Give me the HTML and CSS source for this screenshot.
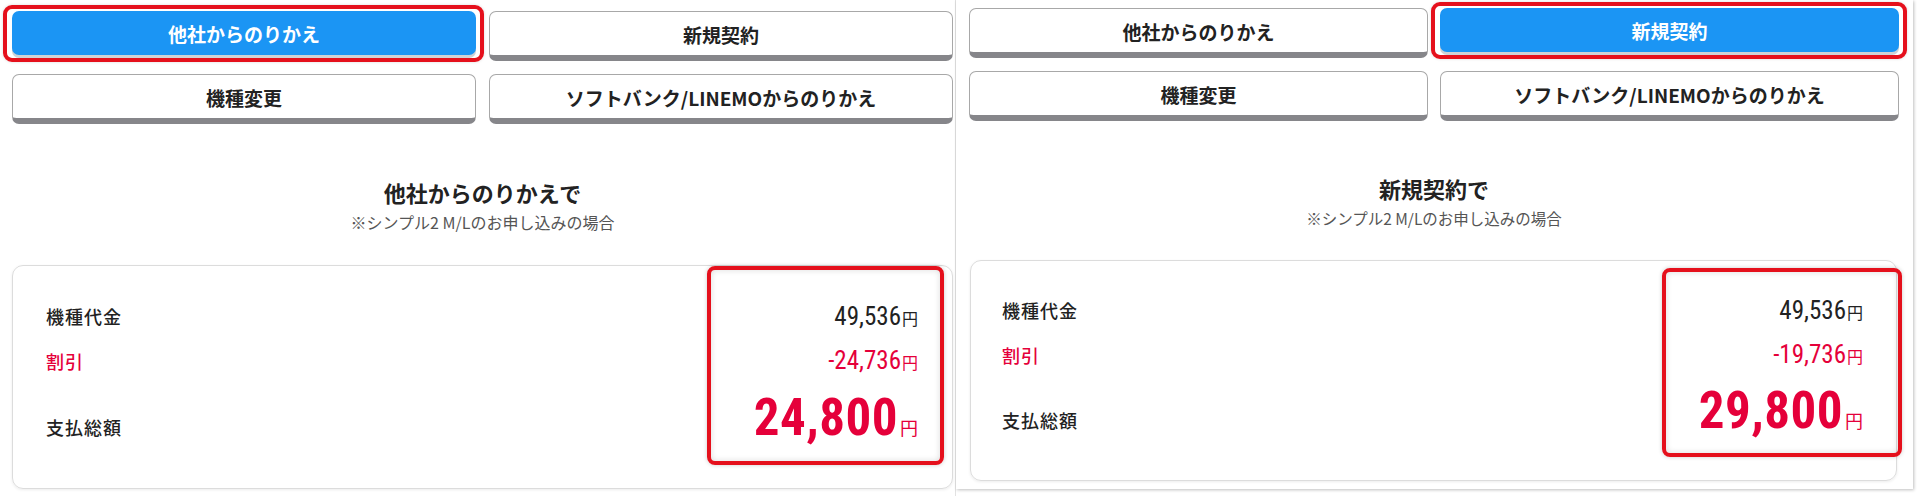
FILE: index.html
```html
<!DOCTYPE html>
<html lang="ja">
<head>
<meta charset="utf-8">
<title>料金比較</title>
<link rel="stylesheet" href="styles.css">
</head>
<body>
<div class="page">
  <section class="panel panel-left">
    <div class="tabs">
      <div class="tab active">他社からのりかえ</div>
      <div class="tab">新規契約</div>
      <div class="tab">機種変更</div>
      <div class="tab">ソフトバンク/LINEMOからのりかえ</div>
    </div>
    <div class="heading">
      <h2 class="title">他社からのりかえで</h2>
      <p class="note">※シンプル2 M/Lのお申し込みの場合</p>
    </div>
    <div class="card">
      <div class="row">
        <span class="label">機種代金</span>
        <span class="value">49,536<span class="yen">円</span></span>
      </div>
      <div class="row discount">
        <span class="label">割引</span>
        <span class="value">-24,736<span class="yen">円</span></span>
      </div>
      <div class="row total">
        <span class="label">支払総額</span>
        <span class="value">24,800<span class="yen">円</span></span>
      </div>
      <div class="mark"></div>
    </div>
  </section>
  <section class="panel panel-right">
    <div class="tabs">
      <div class="tab">他社からのりかえ</div>
      <div class="tab active">新規契約</div>
      <div class="tab">機種変更</div>
      <div class="tab">ソフトバンク/LINEMOからのりかえ</div>
    </div>
    <div class="heading">
      <h2 class="title">新規契約で</h2>
      <p class="note">※シンプル2 M/Lのお申し込みの場合</p>
    </div>
    <div class="card">
      <div class="row">
        <span class="label">機種代金</span>
        <span class="value">49,536<span class="yen">円</span></span>
      </div>
      <div class="row discount">
        <span class="label">割引</span>
        <span class="value">-19,736<span class="yen">円</span></span>
      </div>
      <div class="row total">
        <span class="label">支払総額</span>
        <span class="value">29,800<span class="yen">円</span></span>
      </div>
      <div class="mark"></div>
    </div>
  </section>
</div>
</body>
</html>
```

FILE: styles.css
```css
* { box-sizing: border-box; }

html, body {
  margin: 0;
  padding: 0;
  background: #ffffff;
}

body {
  font-family: "Noto Sans CJK JP", "Noto Sans", sans-serif;
  color: #222222;
}

.page {
  display: flex;
  align-items: flex-start;
  width: 1921px;
  height: 496px;
  overflow: hidden;
}

.panel {
  display: flex;
  flex-direction: column;
  background: #ffffff;
}

.panel-left {
  width: 956px;
  height: 496px;
  padding: 11px 2px 0 12px;
  border-right: 1px solid #e2e2e2;
}

.panel-right {
  width: 957px;
  height: 489px;
  padding: 8px 14px 0 13px;
  box-shadow: 1px 1px 3px rgba(0, 0, 0, 0.25);
  position: relative;
  z-index: 1;
}

/* tabs */
.tabs {
  display: grid;
  grid-template-columns: 1fr 1fr;
  column-gap: 13px;
  row-gap: 13px;
}

.panel-right .tabs {
  column-gap: 12px;
}

.tab {
  position: relative;
  height: 50px;
  display: flex;
  align-items: center;
  justify-content: center;
  background: #ffffff;
  border: 1px solid #a8a8a8;
  border-bottom: 6px solid #86868a;
  border-radius: 7px;
  font-size: 19px;
  font-weight: 700;
  color: #222222;
  padding-top: 1px;
}

.tab.active {
  align-self: start;
  height: 44px;
  border: 0;
  background: #1b95f4;
  color: #ffffff;
  box-shadow: 0 3px 0 #cfd2d6;
  padding-top: 0;
}

.tab.active::after {
  content: "";
  position: absolute;
  top: -6px;
  left: -9px;
  right: -8px;
  bottom: -7px;
  border: 4px solid #e5101c;
  border-radius: 9px;
  box-shadow: 0 0 3px rgba(0, 0, 0, 0.15);
}

/* heading */
.heading {
  text-align: center;
  margin-top: 53px;
}

.panel-right .heading {
  margin-top: 52px;
}

.title {
  margin: 0;
  font-size: 22px;
  line-height: 30px;
  font-weight: 700;
  color: #222222;
}

.note {
  margin: 4px 0 0;
  font-size: 16px;
  line-height: 22px;
  color: #555555;
}

.panel-right .note {
  font-size: 15.5px;
}

/* card */
.card {
  position: relative;
  margin-top: 32px;
  height: 224px;
  border: 1px solid #dcdcdc;
  border-radius: 11px;
  box-shadow: 0 1px 3px rgba(0, 0, 0, 0.08);
  padding: 28px 34px 0 33px;
}

.panel-right .card {
  margin: 31px 2px 0 1px;
  height: 221px;
  padding: 27px 33px 0 31px;
}

.row {
  display: flex;
  justify-content: space-between;
  align-items: center;
  height: 44px;
}

.row.discount {
  height: 45px;
}

.label {
  font-size: 18px;
  font-weight: 500;
  letter-spacing: 1px;
  color: #222222;
}

.value {
  font-family: "Liberation Sans Narrow", "Roboto Condensed", "DejaVu Sans Condensed", "Liberation Sans", sans-serif;
  font-stretch: condensed;
  font-size: 25px;
  color: #222222;
}

.yen {
  font-family: "Noto Sans CJK JP", sans-serif;
  font-size: 16px;
  margin-left: 1px;
}

.discount .label,
.discount .value {
  color: #e5003a;
}

.row.total {
  align-items: baseline;
  height: auto;
  margin-top: 10px;
}

.panel-right .row.total {
  margin-top: 9px;
}

.total .value {
  font-size: 51px;
  line-height: 50px;
  font-weight: 700;
  letter-spacing: 0.5px;
  color: #e5003a;
}

.total .yen {
  font-size: 18px;
  font-weight: 400;
  letter-spacing: 0;
  margin-left: 2px;
}

.mark {
  position: absolute;
  left: 694px;
  top: 0;
  right: 8px;
  bottom: 23px;
  border: 4px solid #e5101c;
  border-radius: 8px;
  box-shadow: inset 0 0 6px rgba(0, 0, 0, 0.14), 0 0 4px rgba(0, 0, 0, 0.2);
}

.panel-right .mark {
  left: 691px;
  top: 7px;
  right: -6px;
  bottom: 23px;
}
```
